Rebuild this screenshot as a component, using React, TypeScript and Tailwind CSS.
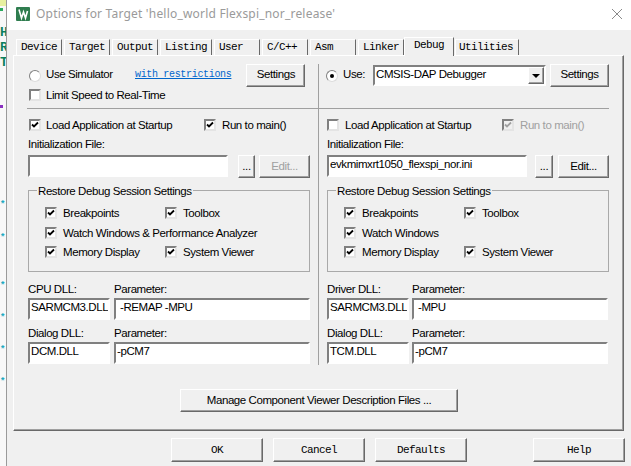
import { FC, ReactNode } from 'react';

const raised =
  'border border-t-white border-l-white border-r-[#696969] border-b-[#696969] shadow-[inset_-1px_-1px_0_#a0a0a0] bg-[#f0f0f0]';
const sunken =
  'border-2 border-t-[#808080] border-l-[#808080] border-r-white border-b-white bg-white';
const tabEdge = 'border-t border-r border-l border-t-white border-r-[#696969] border-l-white';

const Btn: FC<{ className?: string; disabled?: boolean; mono?: boolean; children: ReactNode }> = ({
  className,
  disabled,
  mono,
  children
}) => (
  <button
    className={`flex items-center justify-center ${raised} ${disabled ? 'text-[#a0a0a0]' : ''} ${mono ? 'font-["Liberation_Mono",monospace] text-[11px] tracking-[-0.6px]' : ''} ${className ?? ''}`}
  >
    {children}
  </button>
);

const Box: FC<{ checked?: boolean; disabled?: boolean }> = ({ checked, disabled }) => (
  <span
    className={`flex size-[12px] shrink-0 items-center justify-center border-2 border-t-[#808080] border-l-[#808080] border-r-[#e4e4e4] border-b-[#e4e4e4] ${disabled ? 'bg-[#f0f0f0]' : 'bg-white'}`}
  >
    {checked && (
      <svg viewBox="0 0 8 8" className="size-[8px]">
        <path
          d="M1 3.5 L3 5.5 L7 1.5"
          fill="none"
          stroke={disabled ? '#a0a0a0' : '#000'}
          strokeWidth="1.8"
        />
      </svg>
    )}
  </span>
);

const Check: FC<{ label: string; checked?: boolean; disabled?: boolean; className?: string }> = ({
  label,
  checked,
  disabled,
  className
}) => (
  <div className={`flex items-center ${disabled ? 'text-[#a0a0a0]' : ''} ${className ?? ''}`}>
    <Box checked={checked} disabled={disabled} />
    <span className="pt-[2px]">{label}</span>
  </div>
);

const Radio: FC<{ checked?: boolean }> = ({ checked }) => (
  <span className="flex size-[12px] shrink-0 items-center justify-center rounded-full border border-t-[#808080] border-l-[#808080] border-r-[#dcdcdc] border-b-[#dcdcdc] bg-white">
    {checked && <span className="size-[4px] rounded-full bg-black" />}
  </span>
);

const Field: FC<{ value?: string; className?: string }> = ({ value, className }) => (
  <div className={`flex h-[22px] items-center overflow-hidden pb-[2px] whitespace-nowrap ${sunken} ${className ?? ''}`}>
    {value}
  </div>
);

const Restore: FC<{ watch: string }> = ({ watch }) => (
  <div className="relative h-[82px] w-[282px] border border-[#a9a9a9] pt-[16px] pl-[16px]">
    <span className="absolute top-[-5px] left-[8px] bg-[#f0f0f0] px-[1px]">
      Restore Debug Session Settings
    </span>
    <div className="flex h-[12px] items-center">
      <Check checked label="Breakpoints" className="w-[120px] gap-[6px]" />
      <Check checked label="Toolbox" className="gap-[6px]" />
    </div>
    <Check checked label={watch} className="mt-[8px] h-[12px] gap-[6px]" />
    <div className="mt-[7px] flex h-[12px] items-center">
      <Check checked label="Memory Display" className="w-[120px] gap-[6px]" />
      <Check checked label="System Viewer" className="gap-[6px]" />
    </div>
  </div>
);

const Dlls: FC<{ first: string; dll: string; param: string; dialog: string; right?: boolean }> = ({
  first,
  dll,
  param,
  dialog,
  right
}) => {
  const labelW = right ? 'w-[85px]' : 'w-[86px]';
  const gap = right ? 'gap-[3px]' : 'gap-[4px]';
  return (
    <div className={`mt-[7px] ${right ? 'w-[281px]' : 'w-[282px]'}`}>
      <div className="flex h-[18px] items-center pt-[3px]">
        <span className={labelW}>{first}</span>
        <span>Parameter:</span>
      </div>
      <div className={`mt-[1px] flex ${gap}`}>
        <Field value={dll} className="w-[82px] pl-[1px]" />
        <Field value={param} className="flex-1 pl-[4px]" />
      </div>
      <div className="mt-[3px] flex h-[18px] items-center pt-[3px]">
        <span className={labelW}>Dialog DLL:</span>
        <span>Parameter:</span>
      </div>
      <div className={`mt-[1px] flex ${gap}`}>
        <Field value={dialog} className="w-[82px] pl-[1px]" />
        <Field value="-pCM7" className="flex-1 pl-[1px]" />
      </div>
    </div>
  );
};

const tabs = [
  ['Device', 'w-[46px]'],
  ['Target', 'w-[46px]'],
  ['Output', 'w-[46px]'],
  ['Listing', 'w-[52px]'],
  ['User', 'w-[46px]'],
  ['C/C++', 'w-[46px]'],
  ['Asm', 'w-[46px]'],
  ['Linker', 'w-[46px]']
];

const strip = [
  ['H', 'text-[#0a7f5c]'],
  ['R', 'text-[#0a7f5c]'],
  ['T', 'text-[#0a7f5c]']
];

// leftovers of the editor window behind the dialog
const Strip: FC = () => (
  <div className="w-[6px] shrink-0 overflow-hidden bg-[#f8f8f8] font-['Liberation_Mono',monospace] leading-none">
    <div className="h-[6px] bg-[#e8f0a0]" />
    <div className="mt-[2px] h-[3px] w-[3px] bg-[#2aa85c]" />
    <div className="mt-[15px] text-[13px] font-bold tracking-normal">
      {strip.map(([c, color]) => (
        <div key={c} className={`h-[15px] ${color}`}>
          {c}
        </div>
      ))}
    </div>
    <div className="mt-[34px] h-[3px] w-[3px] bg-[#8a2fc0]" />
    <div className="mt-[93px] flex flex-col text-[9px] font-bold text-[#18a8c0]">
      <span className="h-[6px]">*</span>
      <span className="mt-[27px] h-[6px]">*</span>
      <span className="mt-[42px] h-[6px]">*</span>
      <span className="mt-[26px] h-[6px]">*</span>
      <span className="mt-[26px] h-[6px]">*</span>
      <span className="mt-[26px] h-[6px]">*</span>
    </div>
  </div>
);

export default function App() {
  return (
    <div className='flex h-[466px] w-[631px] overflow-hidden bg-white font-["Liberation_Sans",Arial,sans-serif] text-[11.5px] leading-none tracking-[-0.42px] text-black'>
      <Strip />

      <div className="flex flex-1 flex-col border-l border-[#9a9a9a]">
        <div className="flex h-[30px] shrink-0 items-center bg-white px-[9px] pb-[2px]">
          <svg viewBox="0 0 14 14" className="size-[14px]">
            <rect width="14" height="14" rx="1" fill="#2f7d4f" />
            <path d="M3 2.5 L5.5 11 L7.5 5 L9.5 11 L11.5 4" fill="none" stroke="#fff" strokeWidth="1.6" />
          </svg>
          <span className="ml-[6px] font-['Noto_Sans',sans-serif] text-[12px] tracking-[0.2px] text-[#9a9a9a]">
            Options for Target 'hello_world Flexspi_nor_release'
          </span>
          <svg viewBox="0 0 10 10" className="ml-auto size-[10px]">
            <path d="M0 0 L10 10 M10 0 L0 10" stroke="#8a8a8a" strokeWidth="1" />
          </svg>
        </div>

        <div className="flex flex-1 flex-col bg-[#f0f0f0] pt-[9px]">
          <div className='relative z-10 flex h-[16px] items-end pl-[9px] font-["Liberation_Mono",monospace] text-[11px] tracking-[-0.6px]'>
            {tabs.map(([t, w]) => (
              <div key={t} className={`mr-[2px] flex h-[16px] items-center pl-[4px] ${tabEdge} ${w}`}>
                {t}
              </div>
            ))}
            <div className={`mb-[-1px] ml-[-2px] flex h-[19px] w-[50px] items-center justify-center bg-[#f0f0f0] pb-[4px] ${tabEdge}`}>
              Debug
            </div>
            <div className={`ml-[1px] flex h-[16px] w-[64px] items-center pl-[3px] ${tabEdge}`}>
              Utilities
            </div>
          </div>

          <div className="ml-[6px] flex h-[376px] w-[611px] flex-col border border-t-white border-l-white border-r-[#696969] border-b-[#696969] pt-[8px] shadow-[inset_-1px_-1px_0_#a0a0a0]">
            <div className="flex">
              <div className="h-[301px] w-[305px] border-r border-[#a0a0a0] pl-[14px]">
                <div className="ml-[-1px] h-[45px] w-[291px] border-b border-[#a0a0a0] pl-[2px]">
                  <div className="flex h-[23px] items-center">
                    <Radio />
                    <span className="mb-[1px] ml-[5px] w-[89px]">Use Simulator</span>
                    <a className="mb-[1px] font-['Liberation_Mono',monospace] text-[10px] tracking-[-0.33px] text-[#0066cc] underline">
                      with restrictions
                    </a>
                    <Btn className="ml-[15px] h-[23px] w-[59px] pb-[1px]">Settings</Btn>
                  </div>
                  <Check label="Limit Speed to Real-Time" className="mt-[2px] h-[12px] gap-[5px]" />
                </div>

                <div className="mt-[10px] flex h-[12px] items-center pl-[1px]">
                  <Check checked label="Load Application at Startup" className="w-[175px] gap-[5px]" />
                  <Check checked label="Run to main()" className="gap-[6px]" />
                </div>
                <div className="mt-[5px] h-[17px] leading-[17px]">Initialization File:</div>
                <div className="mt-[2px] flex h-[23px] w-[282px] items-start">
                  <Field className="w-[200px]" />
                  <Btn className="ml-[10px] h-[23px] w-[17px]">...</Btn>
                  <Btn disabled className="ml-[4px] h-[23px] w-[51px]">
                    Edit...
                  </Btn>
                </div>
                <div className="mt-[12px]">
                  <Restore watch="Watch Windows & Performance Analyzer" />
                </div>
                <Dlls first="CPU DLL:" dll="SARMCM3.DLL" param="-REMAP -MPU" dialog="DCM.DLL" />
              </div>

              <div className="w-[290px] pl-[8px]">
                <div className="ml-[-8px] h-[45px] border-b border-[#a0a0a0] pl-[7px]">
                  <div className="flex h-[23px] items-center">
                    <Radio checked />
                    <span className="mb-[1px] ml-[5px] w-[30px]">Use:</span>
                    <div className={`flex h-[21px] w-[173px] items-center pl-[1px] ${sunken}`}>
                      <span className="mb-[1px]">CMSIS-DAP Debugger</span>
                      <span className={`ml-auto flex h-[17px] w-[16px] items-center justify-center ${raised}`}>
                        <span className="border-x-[4px] border-t-[4px] border-x-transparent border-t-black" />
                      </span>
                    </div>
                    <Btn className="ml-[4px] h-[23px] w-[59px] pb-[1px]">Settings</Btn>
                  </div>
                </div>

                <div className="mt-[10px] flex h-[12px] items-center">
                  <Check label="Load Application at Startup" className="w-[175px] gap-[6px]" />
                  <Check checked disabled label="Run to main()" className="gap-[6px]" />
                </div>
                <div className="mt-[5px] h-[17px] leading-[17px]">Initialization File:</div>
                <div className="mt-[2px] flex h-[23px] items-start">
                  <Field value="evkmimxrt1050_flexspi_nor.ini" className="w-[200px] pl-[1px]" />
                  <Btn className="ml-[8px] h-[23px] w-[18px]">...</Btn>
                  <Btn className="ml-[5px] h-[23px] w-[51px]">Edit...</Btn>
                </div>
                <div className="mt-[12px]">
                  <Restore watch="Watch Windows" />
                </div>
                <Dlls right first="Driver DLL:" dll="SARMCM3.DLL" param="-MPU" dialog="TCM.DLL" />
              </div>
            </div>

            <Btn className="mt-[24px] ml-[166px] h-[23px] w-[278px]">
              Manage Component Viewer Description Files ...
            </Btn>
          </div>

          <div className="mt-[7px] flex pl-[164px]">
            <Btn mono className="h-[24px] w-[92px]">OK</Btn>
            <Btn mono className="ml-[10px] h-[24px] w-[92px]">Cancel</Btn>
            <Btn mono className="ml-[10px] h-[24px] w-[92px]">Defaults</Btn>
            <Btn mono className="ml-[66px] h-[24px] w-[92px]">Help</Btn>
          </div>
        </div>
      </div>
    </div>
  );
}
